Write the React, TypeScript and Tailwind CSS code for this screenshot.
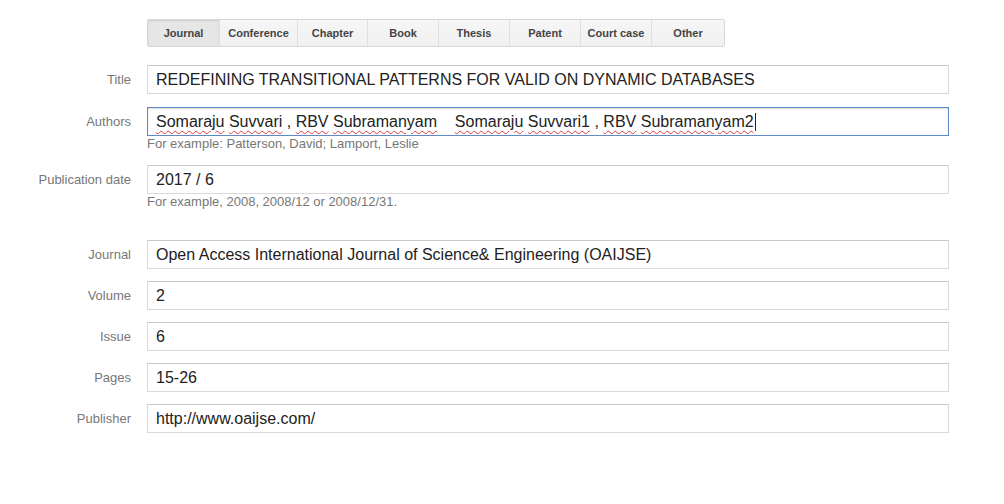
import React from 'react'

const tabs = [
  { name: 'Journal', w: 'w-[71px]', active: true },
  { name: 'Conference', w: 'w-[78px]' },
  { name: 'Chapter', w: 'w-[70px]' },
  { name: 'Book', w: 'w-[71px]' },
  { name: 'Thesis', w: 'w-[71px]' },
  { name: 'Patent', w: 'w-[71px]' },
  { name: 'Court case', w: 'w-[71px]' },
  { name: 'Other', w: 'w-[73px]' },
]

// red squiggle like the browser spellchecker
function Typo({ children }: { children: React.ReactNode }) {
  return (
    <span className="underline decoration-wavy decoration-[#e0393e] decoration-[1px] underline-offset-[3px]">
      {children}
    </span>
  )
}

function Row({ label, children, focused, className = '' }: { label: string; children: React.ReactNode; focused?: boolean; className?: string }) {
  return (
    <div className={'flex items-center ' + className}>
      <div className="w-[131px] text-right text-[13px] text-[#777]">{label}</div>
      <div
        className={
          'ml-[16px] w-[802px] h-[29px] flex items-center px-[8px] text-[16px] text-[#222] ' +
          (focused
            ? 'border border-[#5f8ac8] shadow-[inset_0_1px_2px_rgba(0,0,0,0.15)]'
            : 'border border-[#d9d9d9] border-t-[#c8c8c8]')
        }
      >
        <span className="whitespace-pre">{children}</span>
      </div>
    </div>
  )
}

function Help({ text }: { text: string }) {
  return <div className="ml-[147px] text-[13px] leading-[16px] text-[#777]">{text}</div>
}

export default function App() {
  return (
    <div className="w-[1004px] h-[504px] bg-white font-['Liberation_Sans',Arial,sans-serif]">
      <div className="pt-[19px] pl-[147px]">
        <div className="inline-flex h-[28px] border border-[#d6d6d6] rounded-[2px] overflow-hidden">
          {tabs.map((t, i) => (
            <div
              key={t.name}
              className={
                t.w +
                ' flex items-center justify-center text-[11px] font-bold text-[#444] ' +
                (i > 0 ? 'border-l border-[#e0e0e0] ' : '') +
                (t.active
                  ? 'bg-[#e6e6e6] shadow-[inset_0_1px_2px_rgba(0,0,0,0.1)]'
                  : 'bg-gradient-to-b from-[#f6f6f6] to-[#f0f0f0]')
              }
            >
              {t.name}
            </div>
          ))}
        </div>
      </div>

      <div className="mt-[18px]">
        <Row label="Title">REDEFINING TRANSITIONAL PATTERNS FOR VALID ON DYNAMIC DATABASES</Row>

        <Row label="Authors" focused className="mt-[13px]">
          <Typo>Somaraju</Typo>{' '}<Typo>Suvvari</Typo>{' , '}<Typo>RBV</Typo>{' '}<Typo>Subramanyam</Typo>{'    '}
          <Typo>Somaraju</Typo>{' '}<Typo>Suvvari1</Typo>{' , '}<Typo>RBV</Typo>{' '}<Typo>Subramanyam2</Typo>
          <span className="inline-block align-middle w-[1px] h-[18px] bg-[#222] ml-[1px]"></span>
        </Row>
        <Help text="For example: Patterson, David; Lamport, Leslie" />

        <Row label="Publication date" className="mt-[13px]">2017 / 6</Row>
        <Help text="For example, 2008, 2008/12 or 2008/12/31." />

        <Row label="Journal" className="mt-[30px]">Open Access International Journal of Science&amp; Engineering (OAIJSE)</Row>
        <Row label="Volume" className="mt-[12px]">2</Row>
        <Row label="Issue" className="mt-[12px]">6</Row>
        <Row label="Pages" className="mt-[12px]">15-26</Row>
        <Row label="Publisher" className="mt-[12px]">http://www.oaijse.com/</Row>
      </div>
    </div>
  )
}
